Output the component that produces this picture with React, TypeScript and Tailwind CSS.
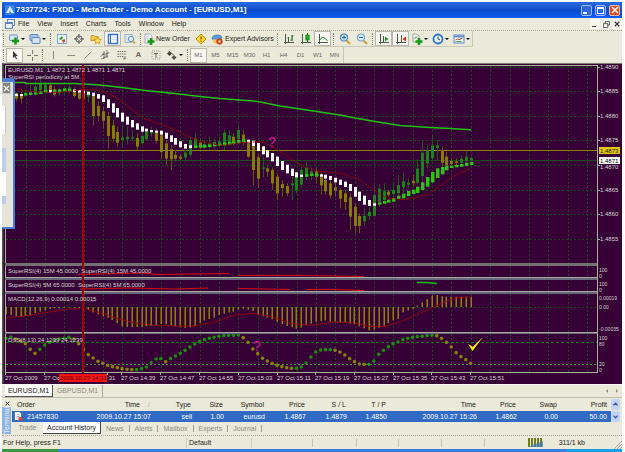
import React from "react";

const FIRST_X = 15.7;
const STEP = 4.84;

type Bar = [number, number, number, number, string];

/* Candles: high, low, body top, body bottom (thirds of a pixel below y = 80), tone */
const candles: Bar[] = [
  [38, 64, 41, 56, "o"], [36, 70, 44, 56, "o"], [30, 50, 38, 46, "g"], [14, 46, 34, 44, "g"],
  [4, 46, 20, 42, "g"], [-10, 40, 10, 30, "g"], [6, 40, 14, 32, "g"], [8, 36, 16, 36, "o"],
  [20, 50, 28, 44, "o"], [22, 46, 30, 40, "g"], [18, 44, 24, 34, "g"], [14, 40, 22, 32, "g"],
  [22, 52, 28, 48, "o"], [30, 60, 36, 56, "o"], [30, 60, 38, 56, "o"], [34, 68, 40, 50, "g"],
  [40, 136, 46, 108, "o"], [64, 124, 78, 108, "o"], [80, 146, 94, 122, "o"], [96, 206, 108, 168, "o"],
  [120, 186, 136, 176, "o"], [140, 200, 156, 188, "o"], [134, 204, 172, 180, "g"], [140, 194, 170, 178, "g"],
  [150, 184, 172, 176, "g"], [160, 212, 174, 200, "o"], [150, 194, 168, 190, "g"], [144, 180, 154, 178, "g"],
  [140, 170, 150, 160, "g"], [146, 190, 152, 182, "o"], [160, 236, 166, 216, "o"], [180, 254, 190, 236, "o"],
  [196, 270, 208, 238, "o"], [210, 244, 224, 236, "o"], [222, 240, 230, 236, "o"], [210, 240, 218, 232, "g"],
  [170, 232, 180, 224, "g"], [160, 206, 176, 200, "g"], [176, 208, 188, 200, "o"], [180, 206, 192, 200, "g"],
  [170, 206, 190, 200, "g"], [176, 204, 186, 198, "g"], [170, 200, 184, 196, "g"], [150, 210, 158, 192, "g"],
  [152, 198, 166, 190, "g"], [160, 196, 170, 188, "o"], [134, 190, 150, 178, "g"], [150, 196, 164, 184, "o"],
  [180, 234, 190, 230, "o"], [190, 316, 198, 270, "o"], [220, 324, 232, 296, "o"], [230, 292, 262, 266, "g"],
  [255, 290, 265, 275, "o"], [262, 330, 270, 310, "o"], [280, 360, 290, 340, "o"], [300, 350, 312, 324, "o"],
  [310, 348, 318, 340, "o"], [290, 360, 310, 316, "g"], [280, 340, 288, 330, "g"], [260, 322, 270, 314, "g"],
  [245, 300, 262, 290, "g"], [262, 300, 274, 286, "g"], [264, 310, 274, 290, "o"], [278, 344, 284, 316, "o"],
  [290, 344, 300, 334, "o"], [300, 356, 310, 346, "o"], [300, 350, 322, 332, "o"], [325, 385, 330, 356, "o"],
  [330, 390, 340, 366, "o"], [340, 450, 352, 410, "o"], [370, 460, 380, 438, "o"], [400, 460, 408, 438, "o"],
  [385, 436, 408, 424, "g"], [380, 420, 396, 408, "g"], [315, 410, 345, 408, "g"], [312, 380, 326, 365, "g"],
  [310, 370, 334, 360, "g"], [330, 350, 335, 345, "o"], [308, 350, 330, 342, "g"], [285, 350, 315, 340, "g"],
  [280, 340, 304, 322, "g"], [295, 325, 308, 314, "g"], [285, 320, 302, 310, "o"], [238, 312, 266, 308, "g"],
  [182, 310, 218, 288, "g"], [195, 265, 212, 250, "g"], [165, 240, 196, 234, "g"], [180, 240, 196, 204, "g"],
  [200, 262, 212, 248, "o"], [215, 262, 230, 256, "o"], [235, 256, 243, 252, "o"], [235, 256, 244, 248, "o"],
  [226, 252, 236, 248, "g"], [212, 246, 230, 242, "g"], [230, 246, 234, 240, "g"],
];

/* Trend ribbon: top, bottom (same units as the candles); w = falling, g = rising */
const ribbon: [number, number, string][] = [
  [41, 48, "w"], [42, 48, "w"], [40, 46, "g"], [39, 45, "g"], [38, 44, "g"], [34, 42, "g"], [30, 38, "g"],
  [30, 38, "w"], [29, 36, "g"], [28, 35, "g"], [26, 33, "g"], [27, 34, "g"], [29, 36, "w"], [30, 37, "w"],
  [32, 40, "w"], [35, 44, "w"], [38, 48, "w"], [42, 56, "w"], [46, 66, "w"], [58, 84, "w"], [70, 98, "w"],
  [84, 112, "w"], [98, 125, "w"], [110, 134, "w"], [120, 142, "w"], [130, 149, "w"], [139, 155, "w"],
  [146, 154, "w"], [150, 156, "w"], [152, 158, "w"], [152, 164, "w"], [158, 176, "w"], [166, 186, "w"],
  [174, 194, "w"], [184, 202, "w"], [192, 206, "w"], [196, 204, "w"], [196, 204, "g"], [196, 203, "g"],
  [195, 203, "g"], [194, 201, "g"], [193, 199, "g"], [191, 197, "g"], [187, 196, "g"], [186, 194, "g"],
  [184, 192, "g"], [180, 190, "g"], [178, 186, "g"], [179, 188, "w"], [182, 198, "w"], [189, 213, "w"],
  [199, 223, "w"], [211, 232, "w"], [219, 244, "w"], [230, 258, "w"], [243, 270, "w"], [254, 280, "w"],
  [266, 288, "w"], [277, 292, "w"], [284, 291, "w"], [282, 290, "g"], [281, 288, "g"], [281, 289, "g"],
  [283, 290, "w"], [284, 296, "w"], [288, 300, "w"], [293, 307, "w"], [299, 315, "w"], [305, 321, "w"],
  [312, 333, "w"], [321, 350, "w"], [335, 363, "w"], [347, 374, "w"], [360, 378, "w"], [370, 377, "w"],
  [367, 374, "g"], [363, 371, "g"], [359, 368, "g"], [354, 365, "g"], [347, 357, "g"], [341, 355, "g"],
  [333, 348, "g"], [329, 342, "g"], [320, 339, "g"], [307, 330, "g"], [291, 320, "g"], [276, 307, "g"],
  [265, 294, "g"], [261, 283, "g"], [257, 271, "g"], [257, 264, "g"], [255, 262, "g"], [252, 260, "g"],
  [248, 258, "g"], [246, 255, "g"],
];

/* Histogram ends in thirds of a pixel below y = 255; the zero line is at 156 */
const macd = [
  178, 180, 184, 184, 182, 180, 174, 170, 165, 162, 160, 160, 159, 158, 158, 160, 162, 165, 172, 178, 184, 188,
  195, 204, 214, 216, 217, 216, 216, 214, 213, 210, 207, 208, 211, 214, 217, 219, 217, 213, 204, 197, 192, 188,
  180, 176, 172, 170, 164, 161, 164, 168, 178, 184, 188, 193, 200, 207, 213, 217, 221, 218, 210, 206, 200, 198,
  196, 200, 200, 202, 202, 206, 208, 214, 220, 226, 224, 218, 212, 204, 196, 192, 172, 166, 162, 152, 142, 132,
  122, 120, 124, 125, 125, 125, 125, 125, 125,
];

const dss = [
  250, 246, 252, 258, 266, 283, 295, 283, 270, 262, 256, 252, 250, 247, 252, 266, 284, 299, 309, 319, 325, 331,
  335, 338, 341, 343, 344, 344, 341, 336, 323, 312, 311, 320, 311, 303, 295, 286, 276, 267, 260, 254, 250, 247,
  244, 242, 241, 241, 240, 248, 262, 282, 296, 310, 318, 325, 331, 335, 338, 340, 340, 336, 324, 306, 291, 285,
  284, 284, 286, 291, 300, 311, 320, 327, 328, 328, 318, 298, 286, 275, 266, 261, 254, 250, 247, 245, 244, 242,
  241, 242, 250, 262, 276, 293, 305, 314, 325,
];

const priceLabels: [string, number][] = [
  ["1.4890", 67], ["1.4885", 91], ["1.4880", 116], ["1.4875", 140], ["1.4870", 165], ["1.4865", 190],
  ["1.4860", 214], ["1.4855", 239],
];

const subLabels: [string, number][] = [
  ["100", 270], ["0", 276], ["100", 284], ["0", 290], ["0.00019", 298], ["0.00", 307], ["-0.00035", 329],
  ["100", 338], ["80", 344], ["20", 364], ["0", 370],
];

/* The cursor's time tag covers the labels between 59 and 107 */
const timeLabels: [string, number][] = [
  ["27 Oct 2009", 5], ["27 Oc", 44], [":31", 107], ["27 Oct 14:39", 121], ["27 Oct 14:47", 160],
  ["27 Oct 14:55", 199], ["27 Oct 15:03", 238], ["27 Oct 15:11", 277], ["27 Oct 15:19", 315],
  ["27 Oct 15:27", 354], ["27 Oct 15:35", 393], ["27 Oct 15:43", 431], ["27 Oct 15:51", 470],
];

const priceAvg =
  "15,82.5 25,82.5 26,83.5 75,83.5 100,85 122,87.5 150,91 175,93.5 200,96.5 220,98.5 240,100 258,101.5 280,106 300,109 320,112 340,115 355,118 375,121.5 400,125.5 415,126.5 430,127.5 450,128.5 471,129.7";
const slowAvg =
  "15,88 25,91 40,92 60,92.5 80,90 95,89.5 105,92 115,97 125,104 135,112 145,119 160,124 175,130 190,137 200,141 210,143.5 222,145.5 235,143.5 250,142 262,142 272,146 282,153 293,160 305,167 315,171 330,172 345,174.5 358,179 370,187 380,194 388,198.5 405,199.5 415,198 428,194 440,186 452,177 460,173 470,169";
const macdSignal =
  "6,318 25,316 50,312 70,309 84,308.5 98,312 115,318 135,323 150,325 175,326 195,326 215,322 235,315 252,313.5 270,316 290,323 310,325.5 335,322 355,323 370,326.5 385,326.5 400,322 420,313 440,304 455,298 471,297";

function PriceChart() {
  const gridX = Array.from({ length: 30 }, (_, i) => Math.round(25.5 + 19.36 * i) + 0.5);
  return (
    <svg
      viewBox="2 63 620 321"
      className="block h-auto w-full font-['Liberation_Sans',Arial,sans-serif] text-[6px]"
      role="img"
      aria-label="EURUSD one minute chart"
    >
      <rect x="2" y="63" width="620" height="321" fill="#360036" />
      <rect x="2" y="63" width="620" height="1" fill="#7d7d74" />
      <rect x="2" y="63" width="1.5" height="321" fill="#55554f" />

      <g stroke="#1d4422" strokeWidth="1" strokeDasharray="2 2">
        {gridX.map((x) => (
          <line key={x} x1={x} x2={x} y1="66" y2="372" />
        ))}
        {priceLabels.map(([t, y]) => (
          <line key={t} x1="6" x2="597" y1={y + 0.5} y2={y + 0.5} />
        ))}
        <line x1="6" x2="597" y1="307.5" y2="307.5" />
      </g>
      <line x1="6" x2="597" y1="342.5" y2="342.5" stroke="#1f6a22" strokeDasharray="3 2" />
      <line x1="6" x2="597" y1="364.5" y2="364.5" stroke="#3f9a34" strokeDasharray="2 2" />

      <line x1="6" x2="597" y1="160.5" y2="160.5" stroke="#1d4820" />
      <line x1="6" x2="597" y1="150.5" y2="150.5" stroke="#8e8400" />

      {candles.map(([hi, lo, top, bottom, tone], i) => {
        const x = Math.round(FIRST_X + STEP * i);
        return (
          <g key={i}>
            <rect x={x} y={80 + hi / 3} width="1" height={(lo - hi) / 3} fill={tone === "o" ? "#5c5a08" : "#1c5a1a"} />
            <rect x={x - 1} y={80 + top / 3} width="3" height={(bottom - top) / 3} fill={tone === "o" ? "#857c08" : "#1b8416"} />
          </g>
        );
      })}
      {ribbon.map(([top, bottom, tone], i) => {
        const x = Math.round(FIRST_X + STEP * i);
        return (
          <rect key={i} x={x - 1} y={80 + top / 3} width={tone === "w" ? 3 : 3.5} height={(bottom - top) / 3} fill={tone === "w" ? "#ffffff" : "#2bc411"} />
        );
      })}
      <polyline points={slowAvg} fill="none" stroke="#a00000" strokeWidth="1" strokeDasharray="2 1" />
      <polyline points={priceAvg} fill="none" stroke="#1fc212" strokeWidth="1.5" />

      {macd.map((end, i) => {
        const x = Math.round(6 + STEP * i);
        return <rect key={i} x={x - 0.5} y={255 + Math.min(156, end) / 3} width="1.5" height={Math.abs(end - 156) / 3} fill="#8c8208" />;
      })}
      <polyline points={macdSignal} fill="none" stroke="#a80000" strokeWidth="1" strokeDasharray="3 1" />
      {dss.map((y, i) => (
        <circle key={i} cx={6 + STEP * i} cy={255 + y / 3} r="1.8" fill={i > 0 && y > dss[i - 1] ? "#85800a" : "#1d8a10"} />
      ))}

      <g fill="none" stroke="#dc0c14" strokeWidth="1">
        <polyline points="78,274.5 143,273 157,274.5 229,273.5" />
        <polyline points="238,275.5 300,275.5 335,276 364,276.5" />
        <polyline points="80,289 130,288 176,289 208,288" />
        <polyline points="238,288.5 290,289.5" />
        <polyline points="306,289.5 335,289.5 364,290.5" />
      </g>
      <polyline points="417,282.5 427,282.5 437,283.5" fill="none" stroke="#14c40c" strokeWidth="1.5" />

      <rect x="5" y="65" width="593" height="1" fill="#a8b098" />
      <rect x="5" y="65" width="1" height="308" fill="#a8b098" />
      <rect x="5" y="263" width="592" height="3" fill="#747074" />
      <g fill="#a9a9a0">
        <rect x="5" y="277" width="592" height="1" />
        <rect x="5" y="291" width="592" height="1" />
        <rect x="5" y="332" width="592" height="1" />
      </g>
      <g fill="#66667c">
        <rect x="5" y="278" width="592" height="2" />
        <rect x="5" y="292" width="592" height="2" />
        <rect x="5" y="333" width="592" height="1" />
      </g>
      <rect x="5" y="372" width="593" height="1" fill="#a8b098" />
      <rect x="597" y="65" width="1" height="308" fill="#a8b098" />
      <g fill="#a8b098">
        {priceLabels.map(([t, y]) => (
          <rect key={t} x="598" y={y} width="2" height="1" />
        ))}
        {timeLabels.map(([t, x]) => (
          <rect key={t} x={x} y="373" width="1" height="2" />
        ))}
      </g>

      <rect x="82" y="65" width="2" height="308" fill="#a00000" />

      <g fill="#d4d4d0">
        <text x="8" y="72">EURUSD,M1&nbsp; 1.4872 1.4872 1.4871 1.4871</text>
        <text x="8" y="79">SuperRSI periodicity at 5M.</text>
        <text x="8" y="273">SuperRSI(4) 15M 45.0000&nbsp; SuperRSI(4) 15M 45.0000</text>
        <text x="8" y="287">SuperRSI(4) 5M 65.0000&nbsp; SuperRSI(4) 5M 65.0000</text>
        <text x="8" y="301">MACD(12,26,9) 0.00014 0.00015</text>
        <text x="8" y="342">DSS(8,13) 24.1239 24.1239</text>
        {timeLabels.map(([t, x]) => (
          <text key={t} x={x} y="380">{t}</text>
        ))}
        {priceLabels.map(([t, y]) => (
          <text key={t} x="600" y={t === "1.4870" ? y + 4 : y + 2}>{t}</text>
        ))}
        <g className="text-[5px]">
          {subLabels.map(([t, y], i) => (
            <text key={i} x="599" y={y + 2}>{t}</text>
          ))}
        </g>
      </g>

      <rect x="599" y="147" width="21" height="7" fill="#e0c808" />
      <text x="600" y="153" fill="#1c1400">1.4873</text>
      <rect x="599" y="157" width="21" height="7" fill="#ffffff" />
      <text x="600" y="163" fill="#000000">1.4871</text>
      <rect x="59" y="374" width="48" height="8" fill="#f41414" />
      <text x="60" y="380" fill="#5c0000">2009.10.27 14:31</text>

      <g fill="#d010a0" className="text-[14px]">
        <text x="268" y="147">?</text>
        <text x="253" y="351">?</text>
      </g>
      <path d="M468 344 L471 345.500 L472.500 347 L483 337 L472.500 351 Z" fill="#f2ee08" />
    </svg>
  );
}

function Ico({ children }: { children: React.ReactNode }) {
  return (
    <svg viewBox="0 0 12 12" className="size-3 shrink-0" fill="none" stroke="#55554e" aria-hidden="true">
      {children}
    </svg>
  );
}

const icons = {
  newChart: <Ico><rect x="1.500" y="2" width="8" height="5.500" rx=".5" fill="#d8e6f4" stroke="#6d94c4" /><path d="M7.500 4.500v7M4 8h7" stroke="#169a16" strokeWidth="2.600" /></Ico>,
  profiles: <Ico><rect x="1" y="1.500" width="8" height="6" rx=".5" fill="#a9c6ec" stroke="#5a86c0" /><rect x="3" y="4.500" width="8" height="6" rx=".5" fill="#d5e2f4" stroke="#5a86c0" /></Ico>,
  market: <Ico><rect x="1.500" y="1.500" width="9" height="9" fill="#eef4fb" stroke="#7fa7d6" /><path d="M3 6l3-3 1 2-2 2z" fill="#20a020" stroke="none" /><path d="M6 7l3-1 0 3-2 1z" fill="#e04818" stroke="none" /></Ico>,
  crosshair: <Ico><circle cx="6" cy="6" r="3.200" /><path d="M6 1v4M6 7v4M1 6h4M7 6h4" /></Ico>,
  navigator: <Ico><path d="M1 2.500h3l1 1h3v4H1z" fill="#f4c94c" stroke="#c08a18" strokeWidth=".8" /><path d="M7.500 4l1.200 2.300 2.600.3-1.900 1.700.5 2.600-2.400-1.300-2.300 1.300.5-2.600L3.800 6.600l2.600-.3z" fill="#ffe368" stroke="#c89010" strokeWidth=".8" /></Ico>,
  terminal: <Ico><rect x="1.500" y="1.500" width="9" height="9" fill="#fff" stroke="#2f6fd4" strokeWidth="1.400" /><path d="M3.500 2v8" stroke="#2f6fd4" /><path d="M5 4.500h4M5 6.500h4" stroke="#b4c8e4" strokeWidth=".7" /></Ico>,
  tester: <Ico><rect x="1" y="1.500" width="7" height="8" fill="#dbe6f2" stroke="#8aa8cc" strokeWidth=".8" /><circle cx="7" cy="6" r="2.600" fill="#e8f2fc" stroke="#5b8ac6" /><path d="M9 8l2 2.500" stroke="#c89a30" strokeWidth="1.600" /></Ico>,
  order: <Ico><path d="M2 1h5l2 2v7H2z" fill="#fff" stroke="#8a9ab0" strokeWidth=".8" /><path d="M3.500 4h3M3.500 6h2" stroke="#98a8c0" strokeWidth=".8" /><path d="M8 5v7M4.500 8.500h7" stroke="#169a16" strokeWidth="2.600" /></Ico>,
  warn: <Ico><path d="M6 1l5 5-5 5-5-5z" fill="#ffd62c" stroke="#c89410" /><path d="M6 3.500v3M6 7.500v1.200" stroke="#7a4c00" strokeWidth="1.200" /></Ico>,
  expert: <Ico><path d="M1 6q0-4 5-4t5 3q-3 2-6 1.500T1 6z" fill="#5c9ad8" stroke="#3a70ac" strokeWidth=".7" /><path d="M2 6.500h7q-1 4-4 4t-3-4z" fill="#f0c850" stroke="none" /><circle cx="8.500" cy="8.500" r="2.800" fill="#d8401c" stroke="#a82808" strokeWidth=".6" /><rect x="7.500" y="7.500" width="2" height="2" fill="#fff" stroke="none" /></Ico>,
  bars: <Ico><path d="M2.500 1v10M1 9.500h10M5.500 4v5M5.500 5h-1M9 2v6M9 3h1.500M7.500 7H9" stroke="#4a5a4a" /><path d="M9 2.500v5" stroke="#1f9a2a" /></Ico>,
  candle: <Ico><path d="M2.500 1v10M1 9.500h10" stroke="#4a5a4a" /><path d="M7.500 0v9" stroke="#167a16" /><rect x="5.800" y="2" width="3.400" height="5" fill="#22a822" stroke="#167a16" strokeWidth=".6" /></Ico>,
  line: <Ico><path d="M2.500 1v10M1 9.500h10" stroke="#4a5a4a" /><path d="M3 7q2-4 4-2.500T10.500 8" stroke="#2a9a3a" /></Ico>,
  zoomIn: <Ico><circle cx="5" cy="4.500" r="3.500" fill="#d6e8fb" stroke="#4c86cc" strokeWidth="1.200" /><path d="M3 4.500h4M5 2.500v4" stroke="#2060b8" /><path d="M7.500 7.500l3.500 3.500" stroke="#d0a030" strokeWidth="2" /></Ico>,
  zoomOut: <Ico><circle cx="5" cy="4.500" r="3.500" fill="#d6e8fb" stroke="#7aa4d8" strokeWidth="1.200" /><path d="M3 4.500h4" stroke="#2060b8" /><path d="M7.500 7.500l3.500 3.500" stroke="#d0a030" strokeWidth="2" /></Ico>,
  scroll: <Ico><path d="M2.500 1v10M1 9.500h10M5.500 3v6" stroke="#4a5a4a" /><path d="M7 3.500l3.500 2.500L7 8.500z" fill="#1c9a2c" stroke="none" /></Ico>,
  shift: <Ico><path d="M2.500 1v10M1 9.500h10M6.500 2v7" stroke="#4a5a4a" /><path d="M11 3.500L7.500 6l3.500 2.500z" fill="#d0301c" stroke="none" /></Ico>,
  indicators: <Ico><path d="M2 1h4l2 2v6H2z" fill="#f2f4ee" stroke="#8a9a8a" strokeWidth=".8" /><path d="M3.500 6q1-3 3-2" stroke="#667" strokeWidth=".8" /><path d="M8 5v7M4.500 8.500h7" stroke="#169a16" strokeWidth="2.600" /></Ico>,
  clock: <Ico><circle cx="6" cy="6" r="4.500" fill="#e6f2ff" stroke="#2a70cc" strokeWidth="1.800" /><path d="M6 3.500V6l2 1" stroke="#345" /></Ico>,
  template: <Ico><rect x="1" y="2" width="10" height="8" fill="#f4f8fd" stroke="#5888c4" /><path d="M1 3.500h10" stroke="#5888c4" strokeWidth="1.600" /><path d="M2.500 7l2-1 2 .5L9.500 5" stroke="#c84830" /><path d="M2.500 8.500h6" stroke="#38a038" strokeWidth=".8" /></Ico>,
  cursor: <Ico><path d="M4 2v7l1.800-1.600L7 10.200l1-.5-1.200-2.600H9z" fill="#3a3a36" stroke="none" /></Ico>,
  cross: <Ico><path d="M6.500 1v4M6.500 8v4M1 6.500h4M8 6.500h4" stroke="#77776f" /></Ico>,
  vline: <Ico><path d="M5.500 2v8" stroke="#888880" /></Ico>,
  hline: <Ico><path d="M2 6.500h8" stroke="#888880" /></Ico>,
  trend: <Ico><path d="M2.500 9.500l7-7" stroke="#888880" /></Ico>,
  channel: <Ico><path d="M1.500 8l4-5M4 10l6-7M2 10l7-3M3 6l6-2M5 2v8M8 1v8" stroke="#6a6a64" strokeWidth=".8" /></Ico>,
  fib: <Ico><path d="M1.500 2.500h9M1.500 5h9M1.500 7.500h6" stroke="#77776f" strokeDasharray="1.500 .7" /><path d="M8 11V8h2.500M8 9.500h2" stroke="#77776f" strokeWidth=".8" /></Ico>,
  label: <Ico><rect x="2" y="2" width="8" height="8" stroke="#8a8a84" strokeDasharray="1 1" strokeWidth=".8" /><path d="M4 4.500h4M6 4.500V9" stroke="#666660" /></Ico>,
  arrows: <Ico><path d="M3.500 2L6 4.500 3.500 7 1 4.500z" fill="#44443e" stroke="none" /><path d="M8 6l2.500 2.500L8 11 5.500 8.500z" fill="#55554e" stroke="none" /><path d="M5.500 4l2 2" /></Ico>,
};

function Caret() {
  return <span className="h-0 w-0 border-x-2 border-t-2 border-x-transparent border-t-black" />;
}

function Grip() {
  return <span className="ml-px h-3 w-px shrink-0 border-l border-dotted border-[#8f8c7c]" />;
}

function Tool({ icon, name, pressed, menu }: { icon: React.ReactNode; name: string; pressed?: boolean; menu?: boolean }) {
  return (
    <button
      type="button"
      aria-label={name}
      className={`flex h-[15px] shrink-0 items-center justify-center ${menu ? "w-[21px] gap-px" : "w-[17px]"} ${pressed ? "border border-[#b9b7a8] bg-[#f7f6f0]" : ""}`}
    >
      {icon}
      {menu && <Caret />}
    </button>
  );
}

function Divider() {
  return (
    <span className="flex w-[5px] shrink-0 justify-center">
      <span className="h-3 w-px border-l border-dotted border-[#8f8c7c]" />
    </span>
  );
}

const deals = [
  ["Order", "21457830"], ["Time", "2009.10.27 15:07"], ["Type", "sell"], ["Size", "1.00"], ["Symbol", "eurusd"],
  ["Price", "1.4867"], ["S / L", "1.4879"], ["T / P", "1.4850"], ["Time", "2009.10.27 15:26"], ["Price", "1.4862"],
  ["Swap", "0.00"], ["Profit", "50.00"],
];

const colWidths = [
  "w-[80px]", "w-[60px]", "w-[41px]", "w-[32px]", "w-[41px]", "w-[41px]", "w-[41px]", "w-[40px]", "w-[90px]",
  "w-[40px]", "w-[41px]", "w-auto",
];

export default function App() {
  return (
    <div className="bg-white pt-0.5 pr-[3px] pl-0.5 font-['Liberation_Sans',Arial,sans-serif] text-[7px] leading-[10px] text-[#1c1c18]">
      <div className="bg-[#ebe9da]">
        <header className="flex h-4 items-center bg-linear-to-b from-[#2a6ce4] via-[#0c4cc8] to-[#0a5cf4] px-[3px] text-white">
          <svg viewBox="0 0 10 10" className="mr-px size-[10px]" aria-hidden="true">
            <rect width="10" height="10" rx="2" fill="#2f86e8" />
            <path d="M5 1L1 8h3l1-3 1 3h3z" fill="#eaf5ff" />
          </svg>
          <h1 className="text-[8px] font-bold whitespace-nowrap">7337724: FXDD - MetaTrader - Demo Account - [EURUSD,M1]</h1>
          <div className="-mr-px ml-auto flex gap-[3px]">
            <button type="button" aria-label="Minimize" className="flex h-[11px] w-[11px] items-end rounded-xs border border-[#9cbcf4] bg-[#2c68e0] p-px">
              <span className="h-0.5 w-1 bg-white" />
            </button>
            <button type="button" aria-label="Maximize" className="flex h-[11px] w-[11px] items-center justify-center rounded-xs border border-[#9cbcf4] bg-[#2c68e0]">
              <span className="size-[7px] border border-t-2 border-white" />
            </button>
            <button type="button" aria-label="Close" className="flex h-[11px] w-[11px] items-center justify-center rounded-xs border border-[#f0b8a4] bg-[#dc4c24]">
              <svg viewBox="0 0 8 8" className="size-2" stroke="#fff" strokeWidth="1.500"><path d="M1 1l6 6M7 1L1 7" /></svg>
            </button>
          </div>
        </header>

        <nav className="flex h-[13px] items-center border-b border-dotted border-[#a9a797] pl-[3px]">
          <svg viewBox="0 0 10 10" className="mr-[3px] size-[10px]" fill="#eaf2fc" stroke="#5c86c4" aria-hidden="true">
            <rect x="2.500" y=".5" width="7" height="6" />
            <rect x=".5" y="3.500" width="7" height="6" />
            <path d="M.5 4.500h7" />
          </svg>
          <div className="flex gap-2">
            {["File", "View", "Insert", "Charts", "Tools", "Window", "Help"].map((m) => (
              <button key={m} type="button">{m}</button>
            ))}
          </div>
          <div className="ml-auto flex gap-px">
            <button type="button" aria-label="Minimize chart" className="flex h-[10px] w-[10px] items-end bg-[#f6f5ee] p-0.5"><span className="h-px w-1 bg-[#444]" /></button>
            <button type="button" aria-label="Restore chart" className="flex h-[10px] w-[10px] items-center justify-center bg-[#f6f5ee]">
              <svg viewBox="0 0 8 8" className="size-[7px]" fill="none" stroke="#444"><path d="M2.500 2.500v-2h5v4h-2M.5 3h5v4.500h-5z" /></svg>
            </button>
            <button type="button" aria-label="Close chart" className="flex h-[10px] w-[10px] items-center justify-center bg-[#f6f5ee]">
              <svg viewBox="0 0 8 8" className="size-[6px]" stroke="#333" strokeWidth="1.500"><path d="M1 1l6 6M7 1L1 7" /></svg>
            </button>
          </div>
        </nav>

        <div className="flex">
          <div className="flex h-4 items-center border-r border-b border-[#c9c7b8]">
            <span className="flex w-1"><Grip /></span>
            <Tool icon={icons.newChart} name="New chart" menu />
            <Tool icon={icons.profiles} name="Profiles" menu />
            <Divider />
            <Tool icon={icons.market} name="Market Watch" />
            <Tool icon={icons.crosshair} name="Data Window" />
            <Tool icon={icons.navigator} name="Navigator" />
            <Tool icon={icons.terminal} name="Terminal" pressed />
            <Tool icon={icons.tester} name="Strategy Tester" />
            <Divider />
            <button type="button" className="flex h-[15px] w-[49px] items-center gap-px whitespace-nowrap">{icons.order}New Order</button>
            <Tool icon={icons.warn} name="MetaEditor" />
            <button type="button" className="flex h-[15px] w-[66px] items-center gap-0.5 pl-0.5 whitespace-nowrap">{icons.expert}Expert Advisors</button>
            <Divider />
            <Tool icon={icons.bars} name="Bar chart" />
            <Tool icon={icons.candle} name="Candlesticks" />
            <Tool icon={icons.line} name="Line chart" pressed />
            <Divider />
            <Tool icon={icons.zoomIn} name="Zoom in" />
            <Tool icon={icons.zoomOut} name="Zoom out" />
            <Divider />
            <Tool icon={icons.scroll} name="Auto scroll" pressed />
            <Tool icon={icons.shift} name="Chart shift" pressed />
            <Tool icon={icons.indicators} name="Indicators" menu />
            <Tool icon={icons.clock} name="Periods" menu />
            <Tool icon={icons.template} name="Templates" menu />
          </div>
        </div>

        <div className="flex">
          <div className="flex h-4 items-center border-r border-[#c9c7b8] text-[6px] text-[#66665e]">
            <span className="flex w-1"><Grip /></span>
            <Tool icon={icons.cursor} name="Cursor" pressed />
            <Tool icon={icons.cross} name="Crosshair" />
            <Divider />
            <Tool icon={icons.vline} name="Vertical line" />
            <Tool icon={icons.hline} name="Horizontal line" />
            <Tool icon={icons.trend} name="Trendline" />
            <Tool icon={icons.channel} name="Channel" />
            <Tool icon={icons.fib} name="Fibonacci" />
            <button type="button" className="h-[15px] w-[17px] text-[8px] font-bold">A</button>
            <Tool icon={icons.label} name="Text label" />
            <Tool icon={icons.arrows} name="Arrows" menu />
            <Divider />
            {["M1", "M5", "M15", "M30", "H1", "H4", "D1", "W1", "MN"].map((p, i) => (
              <button key={p} type="button" className={`h-[15px] w-[17px] text-center ${i === 0 ? "border border-[#b9b7a8] bg-[#f7f6f0]" : ""}`}>{p}</button>
            ))}
          </div>
        </div>

        <main className="relative">
          <PriceChart />
          <aside className="absolute top-[15px] left-0 flex h-[151px] w-[13px] flex-col rounded-tr-sm border-t-4 border-r-2 border-b-2 border-[#4a7cd4] bg-[#e6e4d8]">
            <button type="button" aria-label="Close panel" className="flex h-3 w-[9px] items-center justify-center border border-[#c8c8c4] bg-[#85837c]">
              <svg viewBox="0 0 8 8" className="size-[7px]" stroke="#fff" strokeWidth="1.500"><path d="M1 1l6 6M7 1L1 7" /></svg>
            </button>
            <span className="mt-3 h-7 w-1 border-r border-[#c4c8d0] bg-white" />
            <span className="mt-3.5 h-6 w-1 bg-[#bccdf2]" />
            <span className="h-6 w-1 bg-white" />
            <span className="h-2 w-1 bg-[#bccdf2]" />
          </aside>
        </main>

        <div className="flex h-[13px] items-start border-t border-[#f8f8f4] pl-[3px]">
          <button type="button" className="h-3 w-12 border-r border-b border-[#55554e] bg-white">EURUSD,M1</button>
          <button type="button" className="h-3 w-[50px] border-r border-[#a9a797] text-[#8c8a7c]">GBPUSD,M1</button>
          <div className="mr-1 ml-auto flex h-3 items-center gap-2">
            <button type="button" aria-label="Scroll left"><span className="block border-y-2 border-r-2 border-y-transparent border-r-[#8c8a7c]" /></button>
            <button type="button" aria-label="Scroll right"><span className="block border-y-2 border-l-2 border-y-transparent border-l-[#8c8a7c]" /></button>
          </div>
        </div>

        <section className="flex border-t border-[#bfbdae] pt-px">
          <div className="flex w-[10px] shrink-0 flex-col">
            <button type="button" aria-label="Close terminal" className="flex h-2 items-center justify-center">
              <svg viewBox="0 0 8 8" className="size-[5px]" stroke="#222" strokeWidth="1.600"><path d="M1 1l6 6M7 1L1 7" /></svg>
            </button>
            <span className="mr-px flex h-[27px] items-center justify-center overflow-hidden bg-[#8fb2e4] leading-[9px] text-[#e6effc] [writing-mode:sideways-lr]">Terminal</span>
          </div>
          <div className="min-w-0 grow">
            <div className="flex">
              <table className="w-full table-fixed border-collapse whitespace-nowrap">
                <colgroup>
                  {colWidths.map((w, i) => (
                    <col key={i} className={w} />
                  ))}
                </colgroup>
                <thead>
                  <tr className="h-3">
                    {deals.map(([h], i) => (
                      <th key={i} scope="col" className={`p-0 font-normal ${i === 0 ? "pl-[5px] text-left" : i === 1 ? "pr-3 text-right" : i === 11 ? "pr-1 text-right" : "pr-0.5 text-right"}`}>
                        {h}
                        {i === 1 && <span className="absolute pl-2 text-[#a9a797]">/</span>}
                      </th>
                    ))}
                  </tr>
                </thead>
                <tbody>
                  <tr className="h-[11px] bg-[#316ac5] text-white">
                    {deals.map(([, v], i) => (
                      <td key={i} className={`p-0 ${i === 0 ? "text-left" : i === 11 ? "pr-1 text-right" : "pr-px text-right"}`}>
                        {i === 0 ? (
                          <span className="flex items-center gap-1 pl-0.5">
                            <svg viewBox="0 0 10 10" className="size-[9px]" aria-hidden="true">
                              <path d="M1 0h5l2 2v7H1z" fill="#fff" />
                              <path d="M3 3h3M3 5h3" stroke="#9ab" />
                              <circle cx="7" cy="7.500" r="2.200" fill="#d8442c" />
                            </svg>
                            {v}
                          </span>
                        ) : (
                          v
                        )}
                      </td>
                    ))}
                  </tr>
                </tbody>
              </table>
              <div className="mr-0.5 flex w-[9px] shrink-0 flex-col gap-px">
                {["M1.500 5L4 2.500 6.500 5", "M1.500 3L4 5.500 6.500 3"].map((d, i) => (
                  <button key={d} type="button" aria-label={i ? "Scroll down" : "Scroll up"} className="flex h-[11px] items-center justify-center rounded-xs bg-[#c3d3f8]">
                    <svg viewBox="0 0 8 8" className="size-[7px]" fill="none" stroke="#405890" strokeWidth="1.500"><path d={d} /></svg>
                  </button>
                ))}
              </div>
            </div>
            <div className="flex h-3 items-center text-[#8c8a7c]">
              <button type="button" className="w-[31px]">Trade</button>
              <button type="button" className="h-3 w-[58px] border-r border-b border-[#44443e] bg-white whitespace-nowrap text-[#1c1c18]">Account History</button>
              {["News", "Alerts", "Mailbox", "Experts", "Journal"].map((t) => (
                <button key={t} type="button" className="border-r border-[#a19f90] px-[5px] leading-[7px]">{t}</button>
              ))}
            </div>
          </div>
        </section>

        <footer className="mt-px flex h-[14px] items-center border-t border-dotted border-[#a9a797]">
          <span className="w-[185px] border-r border-[#d0cec0] pl-px">For Help, press F1</span>
          <span className="w-[65px] border-r border-[#d0cec0] pl-0.5">Default</span>
          <span className="h-2 w-[61px] border-r border-[#c4c2b4]" />
          <span className="h-2 w-[44px] border-r border-[#c4c2b4]" />
          <span className="h-2 w-[42px] border-r border-[#c4c2b4]" />
          <span className="h-2 w-[43px] border-r border-[#c4c2b4]" />
          <span className="h-2 w-[43px] border-r border-[#c4c2b4]" />
          <svg viewBox="0 0 15 9" className="ml-auto h-[9px] w-[15px]" aria-hidden="true">
            <path d="M1 0v9M4 0v9M7 0v9M10 0v9M13 0v9" stroke="#6c7c18" strokeWidth="2" />
            <path d="M0 9L15 3v6z" fill="#3c7cc0" opacity=".7" />
          </svg>
          <span className="mr-7 ml-4">311/1 kb</span>
          <svg viewBox="0 0 9 9" className="size-[9px] self-end" stroke="#a9a797" aria-hidden="true"><path d="M1 9l8-8M4 9l5-5M7 9l2-2" /></svg>
        </footer>
        <div className="flex h-[3px] bg-[#3a7ce4]">
          <span className="w-14 bg-[#3a9440]" />
          <span className="ml-auto w-14 bg-[#18a0ec]" />
        </div>
      </div>
    </div>
  );
}
